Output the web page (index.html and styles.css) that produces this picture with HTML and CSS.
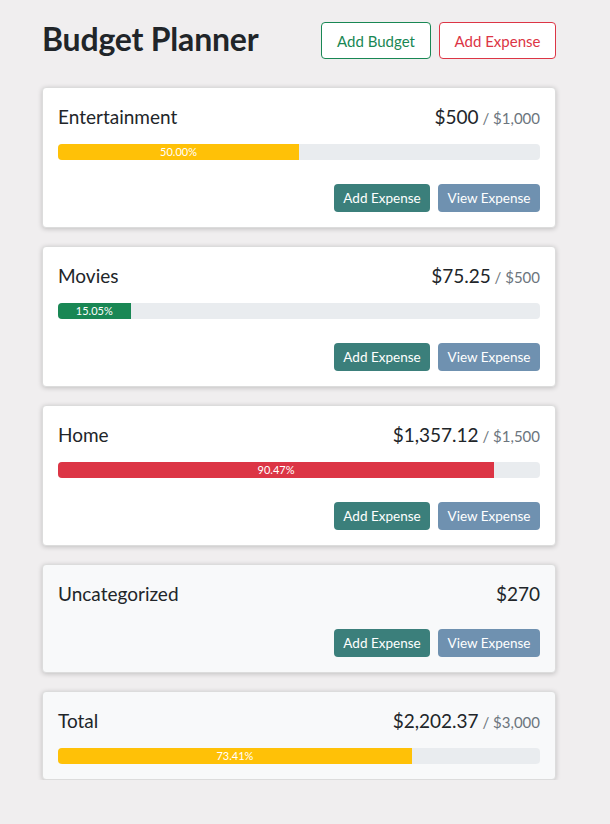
FILE: index.html
```html
<!DOCTYPE html>
<html>
<head>
<meta charset="utf-8">
<link rel="stylesheet" href="styles.css">
</head>
<body>
<div class="container">
  <header class="header">
    <h1 class="title">Budget Planner</h1>
    <div class="header-actions">
      <button class="btn btn-outline-green">Add Budget</button>
      <button class="btn btn-outline-red">Add Expense</button>
    </div>
  </header>

  <div class="cards">
    <div class="card">
      <div class="card-head">
        <span class="card-name">Entertainment</span>
        <span class="amount">$500<span class="max"> / $1,000</span></span>
      </div>
      <div class="bar"><div class="fill fill-yellow" style="width:50%">50.00%</div></div>
      <div class="card-actions">
        <button class="btn btn-teal">Add Expense</button>
        <button class="btn btn-slate">View Expense</button>
      </div>
    </div>

    <div class="card">
      <div class="card-head">
        <span class="card-name">Movies</span>
        <span class="amount">$75.25<span class="max"> / $500</span></span>
      </div>
      <div class="bar"><div class="fill fill-green" style="width:15.05%">15.05%</div></div>
      <div class="card-actions">
        <button class="btn btn-teal">Add Expense</button>
        <button class="btn btn-slate">View Expense</button>
      </div>
    </div>

    <div class="card">
      <div class="card-head">
        <span class="card-name">Home</span>
        <span class="amount">$1,357.12<span class="max"> / $1,500</span></span>
      </div>
      <div class="bar"><div class="fill fill-red" style="width:90.47%">90.47%</div></div>
      <div class="card-actions">
        <button class="btn btn-teal">Add Expense</button>
        <button class="btn btn-slate">View Expense</button>
      </div>
    </div>

    <div class="card card-light">
      <div class="card-head">
        <span class="card-name">Uncategorized</span>
        <span class="amount">$270</span>
      </div>
      <div class="card-actions">
        <button class="btn btn-teal">Add Expense</button>
        <button class="btn btn-slate">View Expense</button>
      </div>
    </div>

    <div class="card card-light">
      <div class="card-head">
        <span class="card-name">Total</span>
        <span class="amount">$2,202.37<span class="max"> / $3,000</span></span>
      </div>
      <div class="bar bar-last"><div class="fill fill-yellow" style="width:73.41%">73.41%</div></div>
    </div>
  </div>
</div>
</body>
</html>
```

FILE: styles.css
```css
* { box-sizing: border-box; }
html, body { margin: 0; padding: 0; }
body {
  background: #f0eeef;
  font-family: "Lato", "Open Sans", sans-serif;
  color: #212529;
}
.container {
  width: 514px;
  margin: 0 0 0 42px;
  padding-top: 18px;
}
.header {
  display: flex;
  align-items: center;
  justify-content: space-between;
  height: 45px;
  margin-bottom: 24px;
}
.title {
  margin: -5px 0 0;
  font-size: 32px;
  font-weight: 700;
  letter-spacing: -0.2px;
  color: #212529;
}
.header-actions {
  display: flex;
  gap: 8px;
}
.btn {
  font-family: inherit;
  border-radius: 4px;
  cursor: pointer;
  background: transparent;
}
.btn-outline-green, .btn-outline-red {
  height: 37px;
  font-size: 15px;
  padding: 0 12px;
  background: #fff;
}
.btn-outline-green { border: 1px solid #198754; color: #198754; width: 110px; }
.btn-outline-red { border: 1px solid #dc3545; color: #dc3545; width: 117px; }

.cards {
  display: flex;
  flex-direction: column;
  gap: 18px;
}
.card {
  background: #fff;
  border: 1px solid #dcdcdc;
  border-radius: 4px;
  box-shadow: 0 1px 5px rgba(0,0,0,0.2);
  padding: 15px 15px 15px;
}
.card-light { background: #f8f9fa; }
.card-head {
  display: flex;
  justify-content: space-between;
  align-items: baseline;
  height: 28px;
  line-height: 28px;
}
.card-name {
  font-size: 19px;
  font-weight: 400;
}
.amount {
  font-size: 19px;
}
.max {
  font-size: 15px;
  color: #6c757d;
}
.bar {
  margin-top: 13px;
  height: 16px;
  background: #e9ecef;
  border-radius: 4px;
  overflow: hidden;
  display: flex;
}
.fill {
  height: 100%;
  color: #fff;
  font-size: 11px;
  line-height: 16px;
  text-align: center;
}
.fill-yellow { background: #ffc107; }
.fill-green { background: #198754; }
.fill-red { background: #dc3545; }
.card-actions {
  display: flex;
  justify-content: flex-end;
  gap: 8px;
  margin-top: 24px;
}
.card-light .card-actions { margin-top: 21px; }
.btn-teal, .btn-slate {
  height: 28px;
  border: none;
  color: #fff;
  font-size: 13.5px;
  padding: 0 8px;
}
.btn-teal { background: #3b7f7b; width: 96px; }
.btn-slate { background: #6f91b0; width: 102px; }
```
